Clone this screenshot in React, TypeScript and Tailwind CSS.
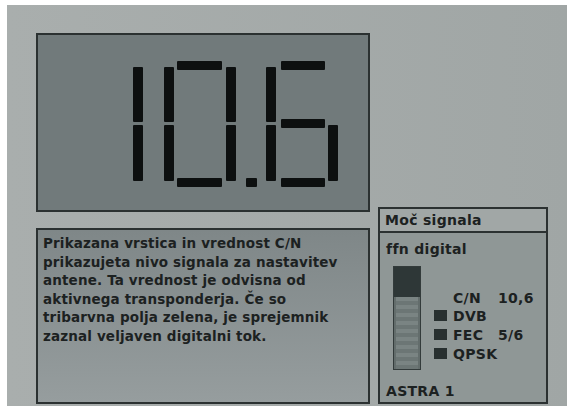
const segments: [number, number, number, number][] = [
  // 1
  [95, 32, 10, 55],
  [95, 90, 10, 56],
  // 0
  [126, 32, 10, 55],
  [126, 90, 10, 56],
  [139, 26, 45, 9],
  [188, 32, 10, 55],
  [188, 90, 10, 56],
  [139, 143, 45, 9],
  // dot
  [208, 143, 11, 9],
  // 6
  [228, 32, 10, 55],
  [228, 90, 10, 56],
  [243, 26, 44, 9],
  [243, 84, 44, 9],
  [290, 90, 10, 56],
  [243, 143, 44, 9],
]

const infoLines = [
  'Prikazana vrstica in vrednost C/N',
  'prikazujeta nivo signala za nastavitev',
  'antene. Ta vrednost je odvisna od',
  'aktivnega transponderja. Če so',
  'tribarvna polja zelena, je sprejemnik',
  'zaznal veljaven digitalni tok.',
]

const signalRows = [
  { mark: false, label: 'C/N', value: '10,6' },
  { mark: true, label: 'DVB', value: '' },
  { mark: true, label: 'FEC', value: '5/6' },
  { mark: true, label: 'QPSK', value: '' },
]

const SegmentDisplay = () => (
  <svg width="330" height="175" viewBox="0 0 330 175" aria-hidden="true">
    {segments.map(([x, y, w, h], i) => (
      <rect key={i} x={x} y={y} width={w} height={h} rx="1" fill="#0d1010" />
    ))}
  </svg>
)

const SignalBar = () => (
  <div className="flex h-[104px] w-[28px] flex-col border border-[#333b3b] bg-[#636d6c]">
    <div className="h-[30px] bg-[#2e3737]" />
    <div className="flex flex-1 flex-col px-[2px]">
      {[...Array(18)].map((_, i) => (
        <div
          key={`stripe-${i}`}
          className={i % 2 === 0 ? 'h-[4px] bg-[#7a8483]' : 'h-[4px] bg-[#6c7675]'}
        />
      ))}
    </div>
  </div>
)

export default function App() {
  return (
    <div
      className="h-[409px] w-[573px] bg-white pl-[7px] pt-[5px] font-bold text-[#1c2121]"
      style={{ fontFamily: '"DejaVu Sans", Verdana, sans-serif' }}
    >
      <div className="flex h-[401px] w-[560px] bg-gradient-to-r from-[#a9aead] to-[#a0a6a5] pb-[2px] pl-[29px] pt-[28px]">
        <div className="flex w-[334px] flex-col gap-[16px]">
          <div className="h-[179px] border-2 border-[#2b3131] bg-[#717a7b]">
            <SegmentDisplay />
          </div>
          <div className="h-[176px] border-2 border-[#2b3131] bg-gradient-to-b from-[#7f8788] to-[#969d9e] pl-[5px] pt-[4px] text-[13.5px] leading-[18.5px] tracking-[0.15px]">
            {infoLines.map((line) => (
              <div key={line} className="whitespace-nowrap">
                {line}
              </div>
            ))}
          </div>
        </div>

        <div className="ml-[8px] flex h-[197px] w-[170px] flex-col self-end border-2 border-[#2b3131] bg-[#8f9796] text-[14px] tracking-[0.3px]">
          <div className="h-[24px] border-b-2 border-[#2b3131] bg-[#a1a7a6] pl-[5px] leading-[22px]">
            Moč signala
          </div>
          <div className="pl-[6px] pt-[7px] leading-[18.5px]">ffn digital</div>
          <div className="mt-[7px] flex pl-[13px]">
            <SignalBar />
            <div className="ml-[13px] pt-[23px] leading-[18.7px]">
              {signalRows.map((row) => (
                <div key={row.label} className="flex items-start">
                  <div
                    className={
                      row.mark
                        ? 'mt-[3px] h-[11px] w-[13px] bg-[#283030]'
                        : 'mt-[3px] h-[11px] w-[13px]'
                    }
                  />
                  <span className="ml-[6px] w-[45px]">{row.label}</span>
                  <span>{row.value}</span>
                </div>
              ))}
            </div>
          </div>
          <div className="mt-auto pb-[2px] pl-[6px] leading-[18.5px]">ASTRA 1</div>
        </div>
      </div>
    </div>
  )
}
